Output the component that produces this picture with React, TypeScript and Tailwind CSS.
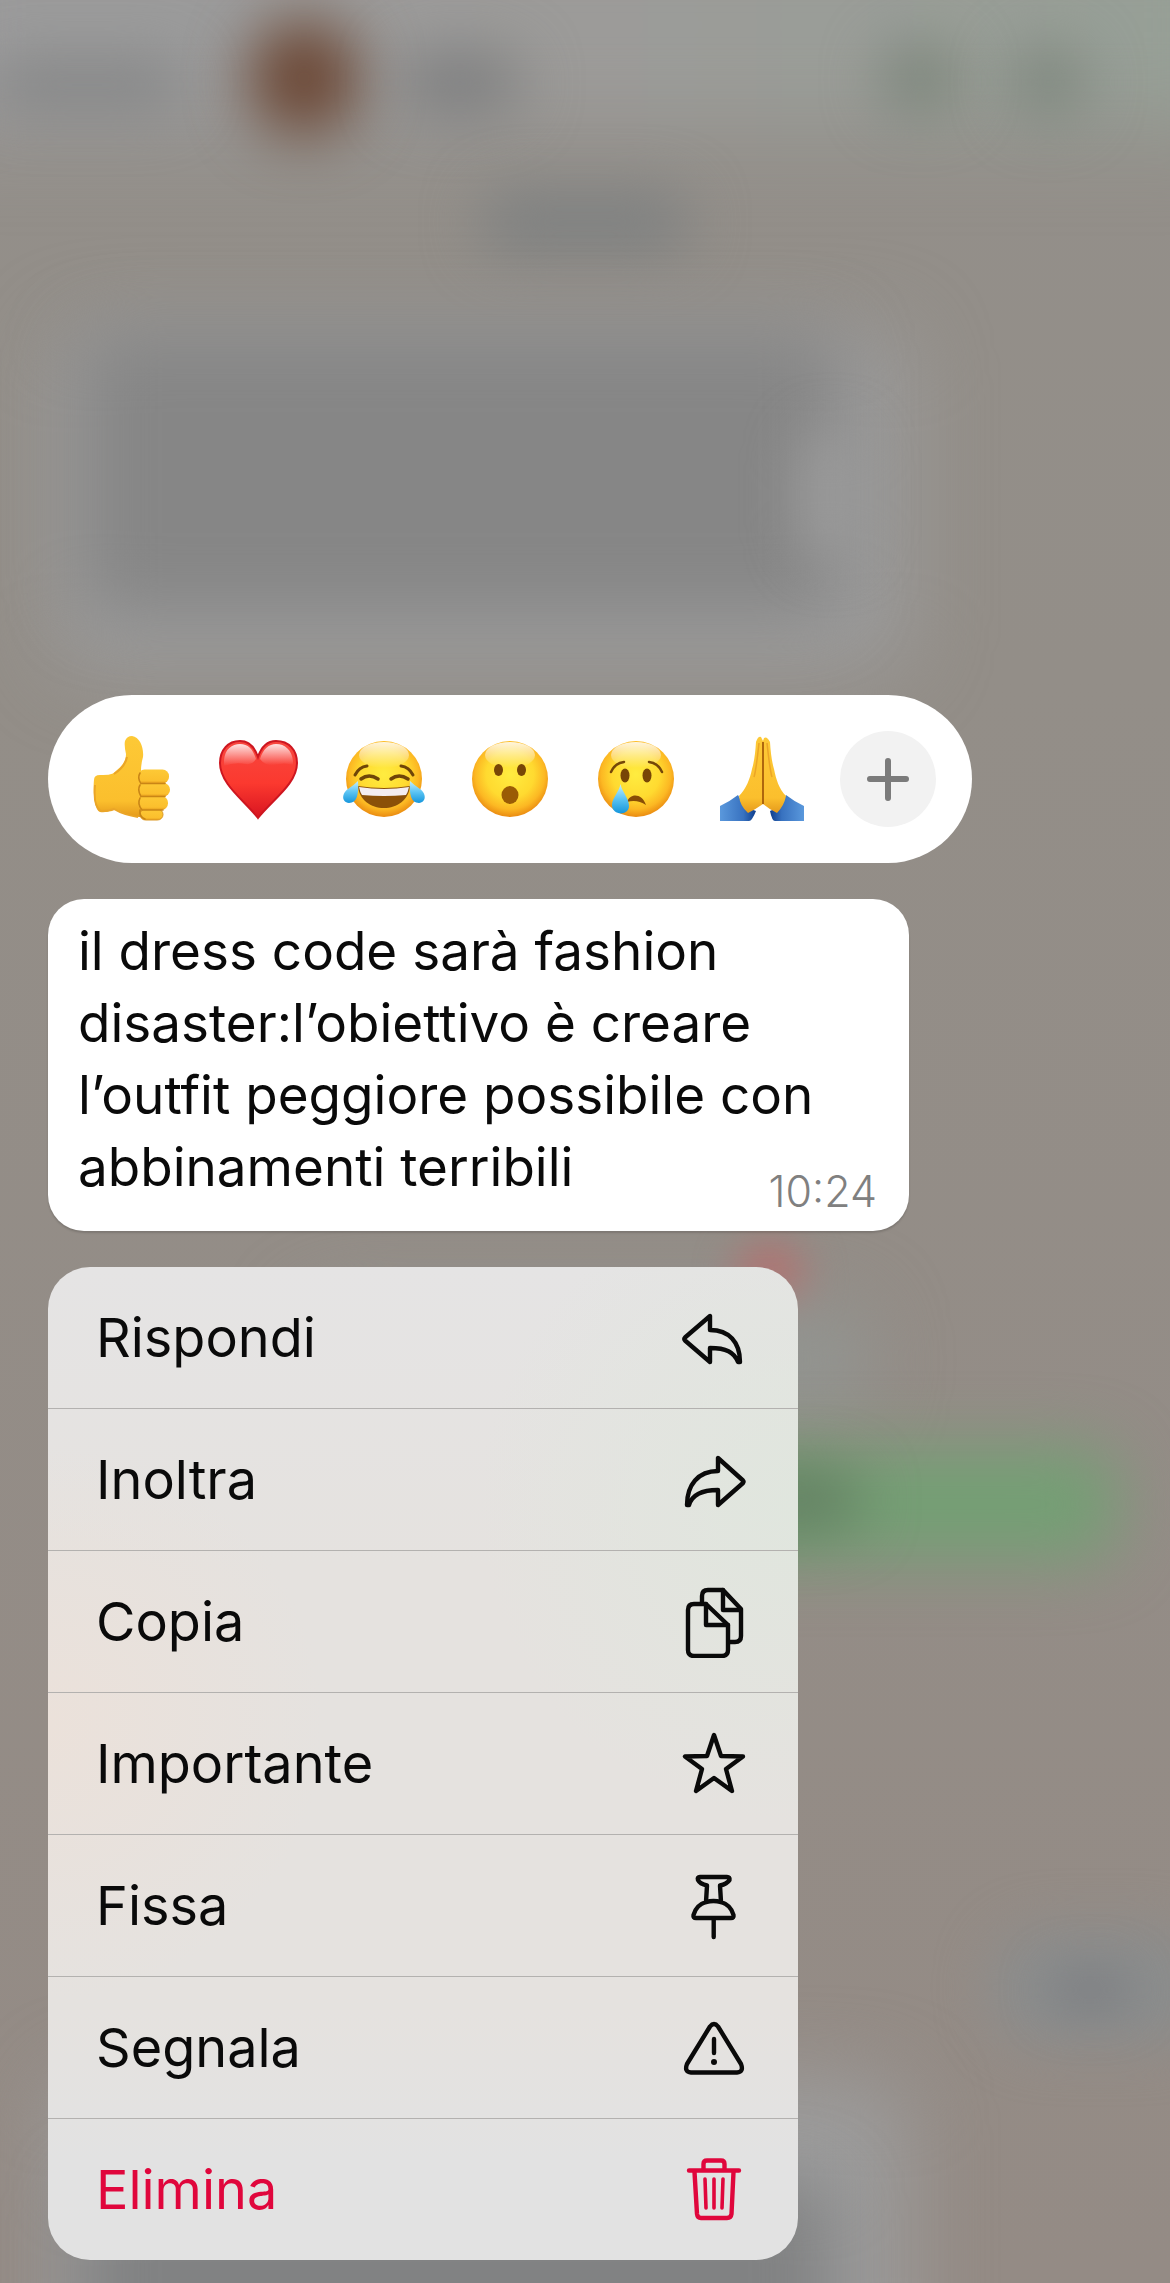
import type { ReactNode } from 'react';

type Action = {
  label: string;
  icon: ReactNode;
  danger?: boolean;
};

function LineIcon({ children }: { children: ReactNode }) {
  return (
    <svg
      viewBox="0 0 72 72"
      className="size-[72px] shrink-0"
      fill="none"
      stroke="currentColor"
      strokeWidth="4.4"
      strokeLinecap="round"
      strokeLinejoin="round"
      aria-hidden="true"
    >
      {children}
    </svg>
  );
}

const actions: Action[] = [
  {
    label: 'Rispondi',
    icon: (
      <LineIcon>
        <path d="M7 35.5 L32 14 V28 C51 28 62 40 62 60 H60 C56 50 48 46 32 46 V60 L7 38.5 Q5.5 37 7 35.5 Z" />
      </LineIcon>
    ),
  },
  {
    label: 'Inoltra',
    icon: (
      <LineIcon>
        <path d="M65 36.5 L40 14 V27 C20 27 9 41 9 61 H11 C14 51 23 46 40 46 V61 L65 39 Q66 37.5 65 36.5 Z" />
      </LineIcon>
    ),
  },
  {
    label: 'Copia',
    icon: (
      <LineIcon>
        <path d="M28 18 H16 Q10 18 10 24 V64 Q10 70 16 70 H44 Q50 70 50 64 V39 Z" />
        <path d="M28 18 V39 H50" />
        <path d="M24 17 V10 Q24 4 30 4 H45 L63 23 V50 Q63 56 57 56 H52" />
        <path d="M45 4 V24 H62" />
      </LineIcon>
    ),
  },
  {
    label: 'Importante',
    icon: (
      <LineIcon>
        <path d="M36 7 L43 28 L65 28.5 L48 41 L54 63 L36 50 L18 63 L24 41 L7 28.5 L29 28 Z" />
      </LineIcon>
    ),
  },
  {
    label: 'Fissa',
    icon: (
      <LineIcon>
        <path d="M22 7 H49 Q52 7 51.5 10 Q49 14 42 15.5 L43 32 Q53 35 55.5 45 Q56 48 53 48 H18 Q15 48 15.5 45 Q18 35 28 32 L29 15.5 Q22 14 20 10 Q19 7 22 7 Z" />
        <path d="M28 32 Q35.5 30 43 32 M35.7 49 V67" />
      </LineIcon>
    ),
  },
  {
    label: 'Segnala',
    icon: (
      <LineIcon>
        <path d="M32 14.5 Q36 9.5 40 14.5 L63 52 Q66 60 59 60.5 H13 Q6 60 9 52 Z" />
        <path d="M36 27 V41" />
        <circle cx="36" cy="50" r="3" fill="currentColor" stroke="none" />
      </LineIcon>
    ),
  },
  {
    label: 'Elimina',
    danger: true,
    icon: (
      <LineIcon>
        <path d="M11 16.5 H61 M25.5 15 V10 Q25.5 6.5 29 6.5 H43 Q46.5 6.5 46.5 10 V15" />
        <path d="M16.5 18 L19 60 Q19.5 64 23 64 H49 Q53 64 53.5 60 L55.5 18" />
        <path d="M27 25 L28 54 M36 25 V54 M45 25 L44 54" strokeWidth="3.6" />
      </LineIcon>
    ),
  },
];

function EmojiSvg({ children }: { children: ReactNode }) {
  return (
    <svg viewBox="0 0 84 84" className="size-[84px] overflow-visible" aria-hidden="true">
      {children}
    </svg>
  );
}

// Gradients shared by every emoji
function EmojiDefs() {
  return (
    <svg className="absolute size-0" aria-hidden="true">
      <defs>
        <radialGradient id="face" cx="50%" cy="44%" r="57%">
          <stop offset="0" stopColor="#ffec40" />
          <stop offset="0.55" stopColor="#ffda30" />
          <stop offset="0.8" stopColor="#fcb823" />
          <stop offset="1" stopColor="#e8860f" />
        </radialGradient>
        <linearGradient id="shine" x1="0" y1="0" x2="0" y2="1">
          <stop offset="0" stopColor="#fff" stopOpacity="0.85" />
          <stop offset="1" stopColor="#fff" stopOpacity="0" />
        </linearGradient>
        <linearGradient id="skin" x1="0" y1="0" x2="0" y2="1">
          <stop offset="0" stopColor="#fdc936" />
          <stop offset="0.8" stopColor="#fbbf2d" />
          <stop offset="1" stopColor="#e59a1c" />
        </linearGradient>
        <linearGradient id="heart" x1="0" y1="0" x2="0" y2="1">
          <stop offset="0" stopColor="#f8473f" />
          <stop offset="0.55" stopColor="#fb392f" />
          <stop offset="1" stopColor="#d81420" />
        </linearGradient>
        <linearGradient id="tear" x1="0" y1="0" x2="0" y2="1">
          <stop offset="0" stopColor="#c4eefe" />
          <stop offset="0.5" stopColor="#5cc4f3" />
          <stop offset="1" stopColor="#1596dc" />
        </linearGradient>
        <linearGradient id="sleeve" x1="0" y1="0" x2="1" y2="0">
          <stop offset="0" stopColor="#5a98dc" />
          <stop offset="0.65" stopColor="#3872c0" />
          <stop offset="1" stopColor="#0e3d8c" />
        </linearGradient>
      </defs>
    </svg>
  );
}

function Face({ children }: { children: ReactNode }) {
  return (
    <EmojiSvg>
      <circle cx="42" cy="42" r="38" fill="url(#face)" />
      <ellipse cx="42" cy="18" rx="25" ry="13" fill="url(#shine)" />
      {children}
    </EmojiSvg>
  );
}

const reactions = [
  {
    label: 'Pollice in su',
    icon: (
      <EmojiSvg>
        <path
          d="M4 43 Q4 38 10 38 Q18 38.5 23 36.5 C32 29 36 25 36 17 Q34 8 35 4 Q37 -1 42 -1 C50 0 54 11 53 20 Q51 27 51 34 L62 46 L60 80 Q48 81 38 78 C30 75 26 72 22 73 Q16 76 10 75 C4 73 3 52 4 43 Z"
          fill="url(#skin)"
        />
        <path d="M24 37 Q35 30 37 20 M5 48 Q3 70 11 74 Q20 74 24 72 Q34 78 48 80" fill="none" stroke="#eaa528" strokeWidth="2" />
        <rect x="50" y="72" width="23" height="11" rx="5.5" fill="url(#skin)" stroke="#dc9823" />
        <rect x="48" y="59" width="30" height="14" rx="6.5" fill="url(#skin)" />
        <rect x="48" y="46" width="32" height="13.5" rx="6.5" fill="url(#skin)" />
        <rect x="48" y="32.5" width="31" height="14" rx="6.5" fill="url(#skin)" />
        <path
          d="M75 46.5 H51 Q47 41 50 36 M75 59.5 H51 Q47 53 50 48 M73 73 H52 Q47 67 50 61 M50 73 Q49 80 55 82"
          fill="none"
          stroke="#c98516"
          strokeWidth="1.6"
          strokeLinecap="round"
        />
      </EmojiSvg>
    ),
  },
  {
    label: 'Cuore',
    icon: (
      <EmojiSvg>
        <path
          d="M42 20 C46 8 53 4 60 4 C73 4 81 13 81 26 C81 47 56 63 42 81 C28 63 4 47 4 26 C4 13 12 4 24 4 C31 4 38 8 42 20 Z"
          fill="url(#heart)"
          stroke="#cd1620"
          strokeWidth="2"
        />
        <path d="M8 23 C9 12 16 7 24 7 C32 7 37 12 40 22 Q36 28 30 27 Q18 25 8 29 Z" fill="url(#shine)" />
        <path d="M44 22 C47 12 53 7 60 7 C69 7 76 13 77 24 V28 Q69 25 58 28 Q49 29 44 22 Z" fill="url(#shine)" />
      </EmojiSvg>
    ),
  },
  {
    label: 'Risata con lacrime',
    icon: (
      <Face>
        <path d="M13 38 Q17 30 25 29 M71 38 Q67 30 59 29" fill="none" stroke="#6f4508" strokeWidth="3" strokeLinecap="round" />
        <path d="M19 42 Q27 36 36 42 M49 42 Q57 36 66 42" fill="none" stroke="#6f4508" strokeWidth="3.5" strokeLinecap="round" />
        <path d="M16 49 Q42 53 68 49 C67 63 55 71 42 71 S17 63 16 49 Z" fill="#8b5008" />
        <path d="M17 50 Q42 54 67 50 Q66 55 64 58 Q42 60 20 58 Q18 55 17 50 Z" fill="#f4edf0" />
        <path d="M16 44 C17 57 15 66 7 66 C-1 65 0 56 6 52 Q12 48 16 44 Z" fill="url(#tear)" />
        <path d="M68 44 C67 57 69 66 77 66 C85 65 84 56 78 52 Q72 48 68 44 Z" fill="url(#tear)" />
      </Face>
    ),
  },
  {
    label: 'Sorpresa',
    icon: (
      <Face>
        <ellipse cx="30.5" cy="33" rx="4.5" ry="6" fill="#784606" />
        <ellipse cx="53.5" cy="33" rx="4.5" ry="6" fill="#784606" />
        <ellipse cx="42" cy="58" rx="8.5" ry="9" fill="#9a5b05" />
      </Face>
    ),
  },
  {
    label: 'Pianto',
    icon: (
      <Face>
        <path d="M17 35 Q21 26 30 25 M68 35 Q64 26 55 25" fill="none" stroke="#754708" strokeWidth="2.5" strokeLinecap="round" />
        <ellipse cx="31" cy="38.5" rx="4.5" ry="7" fill="#784606" />
        <ellipse cx="53" cy="38.5" rx="4.5" ry="7" fill="#784606" />
        <path d="M33 65 C36 56 48 56 52 68 Q43 62 33 65 Z" fill="#894d06" />
        <path d="M26.5 47 C28 55 35 61 35 69 C35 79 18 79 18 68 C18 61 25 55 26.5 47 Z" fill="url(#tear)" />
      </Face>
    ),
  },
  {
    label: 'Mani giunte',
    icon: (
      <EmojiSvg>
        <path d="M0 69 Q9 65 18 58 Q23 70 36 74 Q32 84 29 84 H0 Z" fill="url(#sleeve)" />
        <g transform="translate(84 0) scale(-1 1)">
          <path d="M0 69 Q9 65 18 58 Q23 70 34 74 Q32 84 29 84 H0 Z" fill="url(#sleeve)" />
        </g>
        <path d="M43 67 Q36 72 28 76 Q20 69 19 59 C26 52 30 42 32 32 Q35 22 36 5 Q38 -1 41 0 L43 4 Z" fill="url(#skin)" />
        <path d="M43 67 Q49 72 57 76 Q64 69 66 59 C59 52 56 42 54 32 Q51 22 50 5 Q47 -1 44 1 L43 4 Z" fill="url(#skin)" />
        <path d="M43 5 V67" stroke="#a65d0a" strokeWidth="1.8" />
        <path d="M39 6 Q36 34 34 40 M47 6 Q50 34 52 40" fill="none" stroke="#eba526" strokeWidth="1.5" />
      </EmojiSvg>
    ),
  },
];

// Out-of-focus conversation behind the menu
function BlurredChat() {
  return (
    <div aria-hidden="true" className="pointer-events-none absolute inset-0 overflow-hidden bg-linear-to-b from-[#938f8a] via-[#938e88] via-30% to-[#948b85]">
      <div className="absolute -inset-x-20 -top-20 h-[210px] bg-linear-to-r from-[#9b9b9c] via-[#9c9b99] to-[#96a096] blur-[44px]" />
      <div className="absolute top-[60px] -left-2 h-[50px] w-[190px] rounded-full bg-[#868788] blur-[28px]" />
      <div className="absolute top-[20px] left-[248px] h-[116px] w-[112px] rounded-full bg-[#6c4836] blur-[30px]" />
      <div className="absolute top-[54px] left-[400px] h-[58px] w-[120px] rounded-full bg-[#7c7d7e] blur-[30px]" />
      <div className="absolute top-[44px] right-[210px] h-[70px] w-[80px] rounded-full bg-[#7d867c] blur-[28px]" />
      <div className="absolute top-[44px] right-[84px] h-[76px] w-[76px] rounded-full bg-[#7f887f] blur-[28px]" />
      <div className="absolute top-[190px] left-[480px] h-[64px] w-[210px] rounded-full bg-[#7f8181] blur-[28px]" />

      <div className="absolute top-[330px] left-[56px] h-[340px] w-[850px] rounded-[40px] bg-[#9c9c9c] blur-[40px]" />
      <div className="absolute top-[330px] left-[80px] h-[285px] w-[760px] rounded-[30px] bg-[#868686] blur-[34px]" />
      <div className="absolute top-[430px] left-[800px] h-[130px] w-[60px] rounded-full bg-[#9a9a9a] blur-[26px]" />

      <div className="absolute top-[1245px] left-[736px] size-[68px] rounded-full bg-[#b86c6b] blur-[20px]" />
      <div className="absolute top-[1300px] left-[300px] h-[120px] w-[570px] rounded-[40px] bg-[#929490] blur-[36px]" />
      <div className="absolute top-[1448px] right-[52px] left-[600px] h-[112px] rounded-[40px] bg-[#749f74] blur-[32px]" />
      <div className="absolute top-[1470px] left-[740px] h-[60px] w-[120px] rounded-full bg-[#637f62] blur-[28px]" />
      <div className="absolute top-[1930px] -right-10 h-[115px] w-[220px] rounded-full bg-[#8b8d8d] blur-[26px]" />
      <div className="absolute top-[1970px] right-[40px] h-[40px] w-[80px] rounded-full bg-[#7c7e82] blur-[24px]" />

      <div className="absolute top-[2080px] left-[56px] h-[300px] w-[850px] rounded-[40px] bg-[#9c9c9c] blur-[40px]" />
      <div className="absolute top-[2180px] left-[80px] h-[200px] w-[750px] rounded-[30px] bg-[#818283] blur-[34px]" />
    </div>
  );
}

export default function App() {
  return (
    <main className="relative flex min-h-screen flex-col items-start justify-end gap-9 overflow-hidden px-12 pt-12 pb-[23px] font-['Inter',sans-serif] text-[#0a0a0a]">
      <BlurredChat />
      <EmojiDefs />

      <div className="relative flex items-center gap-[30px] rounded-full bg-white p-9">
        {reactions.map((reaction) => (
          <button key={reaction.label} type="button" aria-label={reaction.label} className="flex size-24 items-center justify-center">
            {reaction.icon}
          </button>
        ))}
        <button type="button" aria-label="Altre reazioni" className="flex size-24 items-center justify-center rounded-full bg-[#f2f2f2] text-[#7b7b7b]">
          <svg viewBox="0 0 48 48" className="size-12" fill="none" stroke="currentColor" strokeWidth="6" strokeLinecap="round" aria-hidden="true">
            <path d="M24 6 V43 M6 24 H42" />
          </svg>
        </button>
      </div>

      <article className="relative w-full max-w-[861px] rounded-[36px] bg-white px-[30px] pt-4 pb-7 shadow-[0_2px_2px_rgba(0,0,0,0.15)]">
        <p className="text-[53px] leading-[72px]">
          il dress code sarà fashion
          <br />
          disaster:l’obiettivo è creare
          <br />
          l’outfit peggiore possibile con
          <br />
          abbinamenti terribili
        </p>
        <time className="absolute right-8 bottom-4 text-[43px] leading-12 font-light text-[#808080]">10:24</time>
      </article>

      <ul className="relative w-full max-w-[750px] divide-y divide-[#b3b1af] overflow-hidden rounded-[42px] bg-[#e4e2e0] bg-[radial-gradient(circle_at_0%_46%,#ebe1da_0%,transparent_30%),radial-gradient(circle_at_100%_24%,#e0e6de_0%,transparent_30%),linear-gradient(to_bottom,#e5e4e4,#e5e2df_30%,#e5e2df_75%,#e2e2e2_90%)]">
        {actions.map((action) => (
          <li key={action.label}>
            <button
              type="button"
              className={`flex h-[141px] w-full items-center justify-between px-12 text-left text-[54px] leading-[72px] ${action.danger ? 'text-[#e0063c]' : ''}`}
            >
              {action.label}
              {action.icon}
            </button>
          </li>
        ))}
      </ul>
    </main>
  );
}
